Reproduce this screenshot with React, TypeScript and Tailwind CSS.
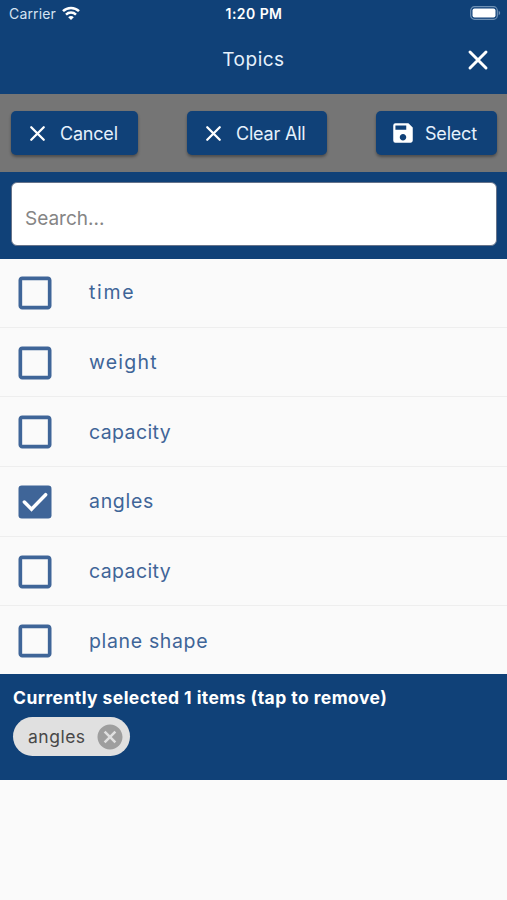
import { useState } from 'react';
import { MdCancel, MdCheckBoxOutlineBlank, MdSave } from 'react-icons/md';

const topics = [
  { id: 1, name: 'time', spacing: 'tracking-[1.7px]' },
  { id: 2, name: 'weight', spacing: 'tracking-[1.2px]' },
  { id: 3, name: 'capacity', spacing: 'tracking-[0.4px]' },
  { id: 4, name: 'angles', spacing: 'tracking-[0.7px]' },
  { id: 5, name: 'capacity', spacing: 'tracking-[0.4px]' },
  { id: 6, name: 'plane shape', spacing: 'tracking-[0.65px]' },
];

function CloseIcon({ size }: { size: number }) {
  return (
    <svg width={size} height={size} viewBox="0 0 24 24" fill="none" stroke="white" strokeWidth="2.2" strokeLinecap="round">
      <path d="M6 6l12 12M18 6 6 18" />
    </svg>
  );
}

function CheckedIcon() {
  return (
    <svg width="44" height="44" viewBox="0 0 24 24" fill="none">
      <rect x="3" y="3" width="18" height="18" rx="1.8" fill="#3f6598" />
      <path d="m6.2 12 3.9 3.9 7.7-7.9" stroke="white" strokeWidth="1.9" strokeLinecap="round" />
    </svg>
  );
}

function StatusBar() {
  return (
    <div className="grid h-[27px] grid-cols-3 items-center pl-[9px] pr-[6px] text-[14px]">
      <div className="flex items-center gap-[6px] text-[#d5e3f2]">
        <span className="tracking-[0.15px]">Carrier</span>
        <svg className="-mt-[2px]" width="18" height="14" viewBox="0 0 18 14" fill="none" stroke="white" strokeWidth="2.5">
          <path d="M1 5.2C5.4.8 12.6.8 17 5.2" />
          <path d="M4 8.6c2.8-2.7 7.2-2.7 10 0" />
          <path d="M9 14 6.2 11.2c1.5-1.5 4.1-1.5 5.6 0Z" fill="white" stroke="none" />
        </svg>
      </div>
      <div className="-ml-[2px] text-center font-semibold tracking-[0.45px]">1:20 PM</div>
      <svg className="-mt-px justify-self-end" width="31" height="14" viewBox="0 0 31 14">
        <rect x="0.7" y="0.7" width="26.6" height="12.6" rx="3.8" fill="none" stroke="#6f91b5" strokeWidth="1.2" />
        <rect x="2.5" y="2.5" width="23" height="9" rx="2" fill="white" />
        <path d="M28.7 4.8c2 .8 2 3.6 0 4.4Z" fill="#6f91b5" />
      </svg>
    </div>
  );
}

export default function App() {
  const [selected, setSelected] = useState<number[]>([4]);
  const [search, setSearch] = useState('');

  const toggle = (id: number) =>
    setSelected((prev) => (prev.includes(id) ? prev.filter((x) => x !== id) : [...prev, id]));

  const button =
    'flex h-[44px] items-center rounded-[5px] bg-[#104178] text-[18px] text-[#e6f1fc] shadow-[0_2px_3px_rgba(0,0,0,0.35)]';

  return (
    <main className="h-[900px] w-full overflow-hidden bg-[#fafafa] font-['Inter',sans-serif]">
      <header className="h-[94px] bg-[#104178] text-white">
        <StatusBar />
        <div className="grid h-[65px] grid-cols-[44px_1fr_44px] items-center px-[7px]">
          <h1 className="col-start-2 pt-[2px] text-center text-[19px] tracking-[0.5px] text-[#e6f1fc]">Topics</h1>
          <button className="flex justify-center">
            <CloseIcon size={32} />
          </button>
        </div>
      </header>

      <div className="flex h-[78px] items-center justify-between bg-[#757575] pl-[11px] pr-[10px]">
        <button className={`${button} w-[127px] pl-[14px]`}>
          <CloseIcon size={25} />
          <span className="ml-[10px] tracking-[-0.2px]">Cancel</span>
        </button>
        <button className={`${button} w-[140px] pl-[14px]`} onClick={() => setSelected([])}>
          <CloseIcon size={25} />
          <span className="ml-[10px] tracking-[-0.2px]">Clear All</span>
        </button>
        <button className={`${button} w-[121px] pl-[14px]`}>
          <MdSave size={26} color="white" />
          <span className="ml-[9px] tracking-[-0.2px]">Select</span>
        </button>
      </div>

      <div className="h-[87px] bg-[#104178] pl-[11px] pr-[10px] pt-[10px]">
        <input
          className="h-[64px] w-full rounded-[6px] border border-[#66738a] bg-white px-[13px] pt-[8px] text-[19px] text-[#555] placeholder:text-[#858585]"
          placeholder="Search..."
          value={search}
          onChange={(e) => setSearch(e.target.value)}
        />
      </div>

      <ul className="h-[415px] overflow-hidden">
        {topics
          .filter((t) => t.name.includes(search))
          .map((topic) => (
            <li
              key={topic.id}
              className="flex h-[69.7px] items-center border-b border-[#eeeeee] pl-[13px] pt-[1px] text-[#3f6598] first:-mt-px"
              onClick={() => toggle(topic.id)}
            >
              {selected.includes(topic.id) ? <CheckedIcon /> : <MdCheckBoxOutlineBlank size={44} />}
              <span className={`ml-[32px] text-[19.5px] ${topic.spacing}`}>{topic.name}</span>
            </li>
          ))}
      </ul>

      {/* Selected topics */}
      <section className="h-[106px] bg-[#104178] pl-[13px] pt-[12px]">
        <p className="h-[31px] text-[17.5px] font-bold leading-[24px] tracking-[0.44px] text-white">
          Currently selected {selected.length} items (tap to remove)
        </p>
        <div className="flex gap-2">
          {topics
            .filter((t) => selected.includes(t.id))
            .map((topic) => (
              <button
                key={topic.id}
                className="flex h-[39px] w-[117px] items-center justify-between rounded-full bg-[#e0e0e0] pl-[15px] pr-[5px] text-[17.5px] text-[#484848]"
                onClick={() => toggle(topic.id)}
              >
                <span className="pt-[2px] tracking-[0.5px]">{topic.name}</span>
                <MdCancel size={30} color="#9e9e9e" />
              </button>
            ))}
        </div>
      </section>
    </main>
  );
}
